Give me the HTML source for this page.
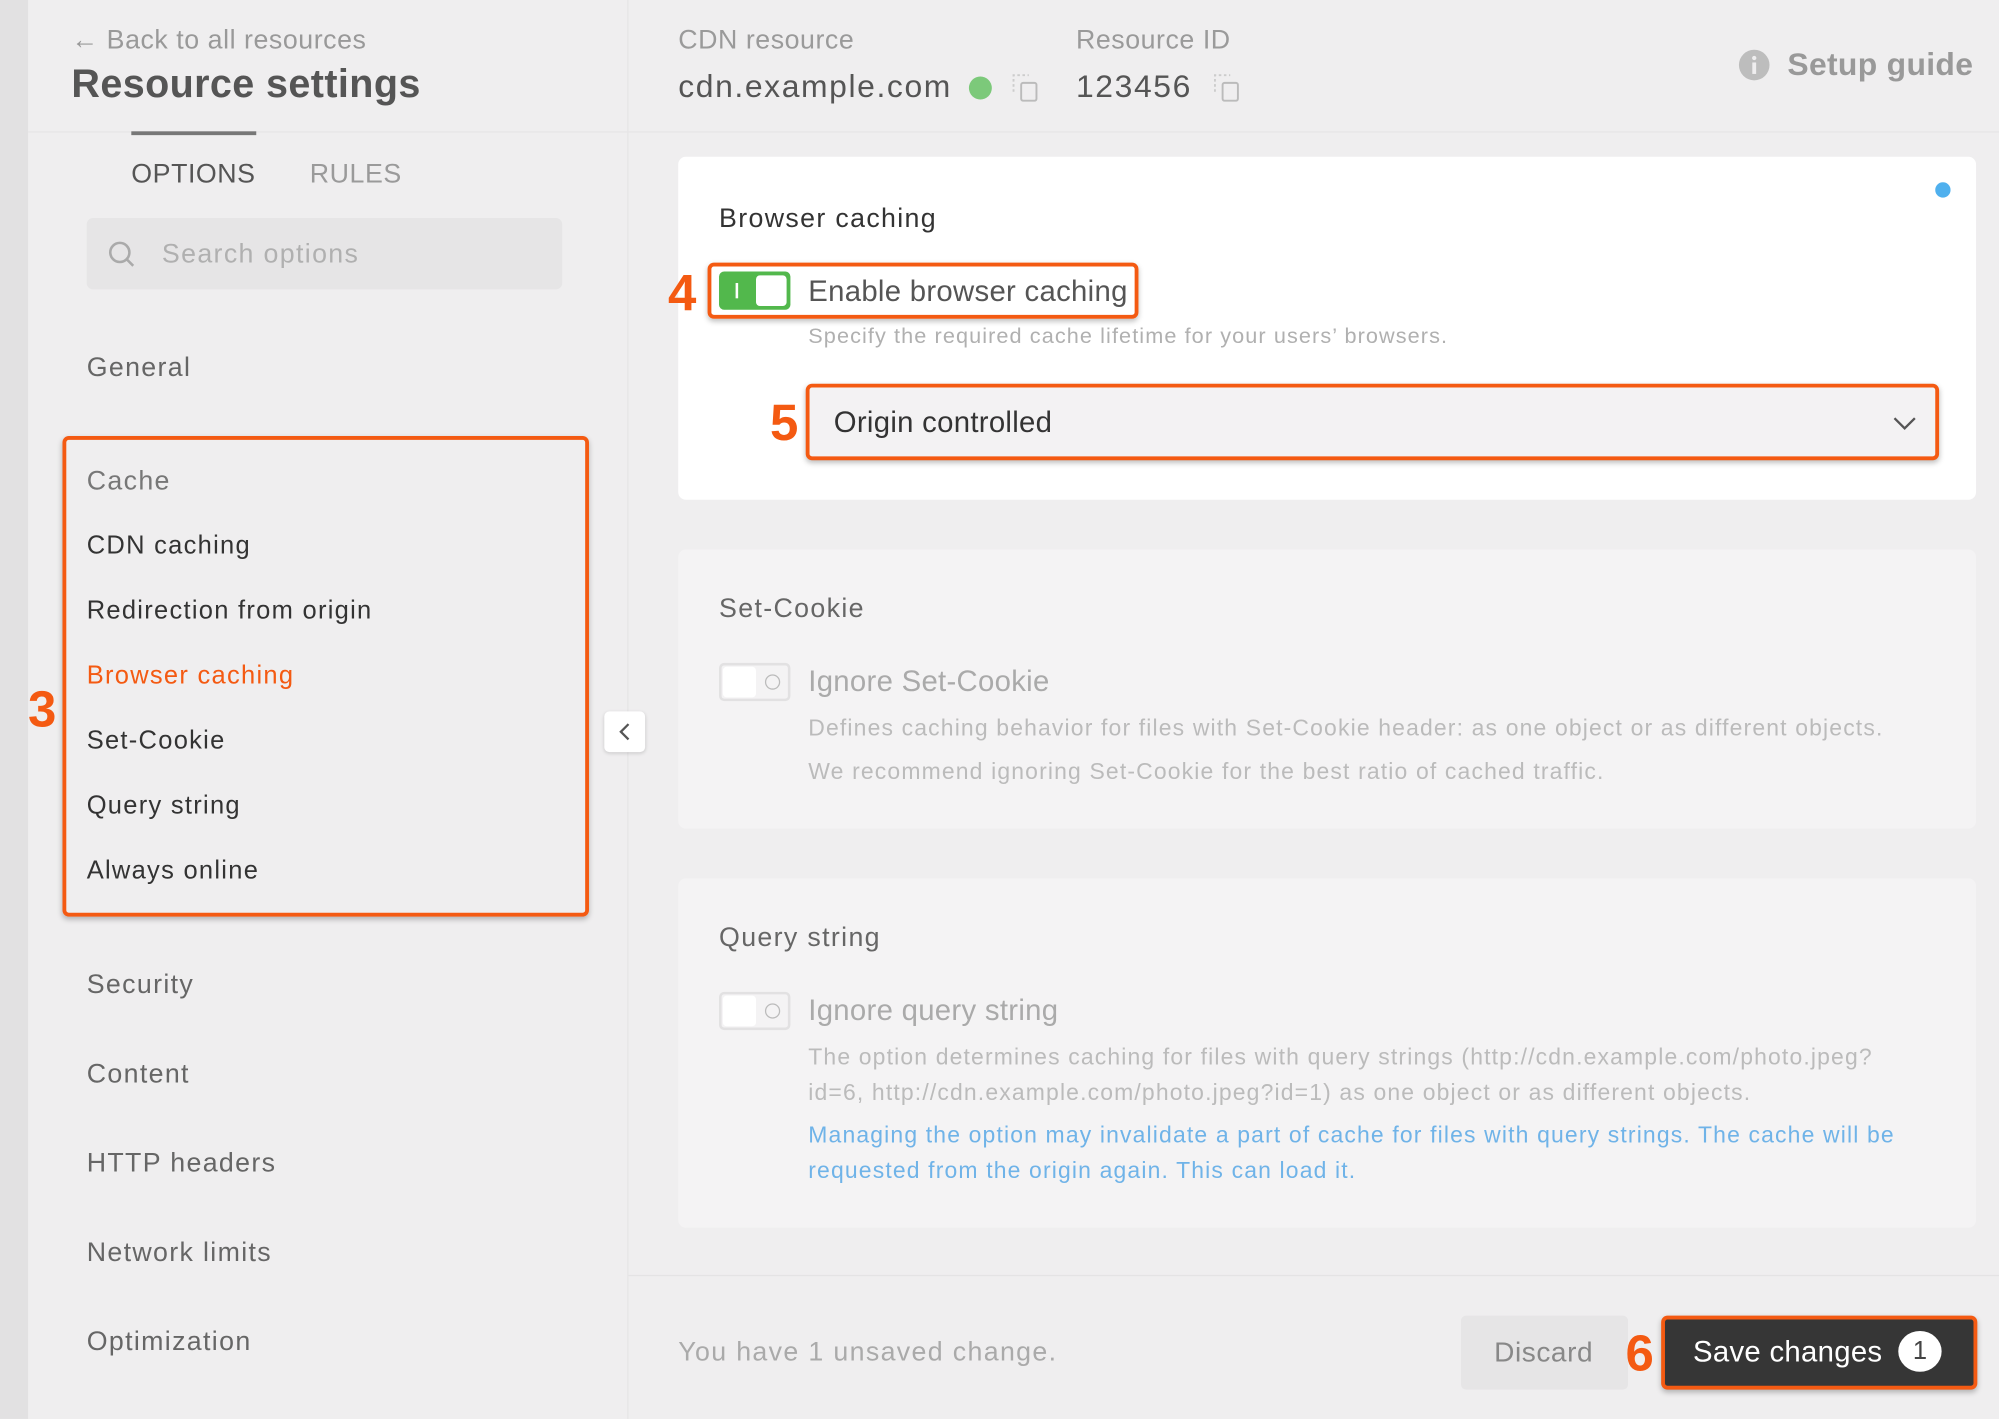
<!DOCTYPE html>
<html><head><meta charset="utf-8"><style>
*{box-sizing:border-box;margin:0;padding:0}
html,body{width:1999px;height:1419px;overflow:hidden;background:#efeeef;font-family:"Liberation Sans",sans-serif}
#w{position:absolute;left:0;top:0;width:1568px;height:1113px;transform:scale(1.27487);transform-origin:0 0;background:#efeeef}
.a{position:absolute;white-space:nowrap;line-height:1;letter-spacing:0.05em}
.o{position:absolute;border:3px solid #f45a12;border-radius:5px;box-shadow:0 2px 4px rgba(0,0,0,.25)}
.n{position:absolute;color:#f45a12;font-weight:bold;font-size:40px;line-height:1}
.card{position:absolute;left:532px;width:1018px;border-radius:6px}
.tg{position:absolute;width:56px;height:30px;border-radius:4px}
</style></head><body><div id="w">
<div style="position:absolute;left:0;top:0;width:22px;height:1113px;background:#e2e1e2"></div>
<div style="position:absolute;left:492px;top:0;width:1px;height:1113px;background:#e6e5e6"></div>
<div style="position:absolute;left:22px;top:103px;width:1546px;height:1px;background:#e6e5e6"></div>

<div class="a" style="left:56px;top:21px;font-size:21px;color:#999;letter-spacing:0.02em">← Back to all resources</div>
<div class="a" style="left:56px;top:50px;font-size:31px;color:#555;font-weight:bold;letter-spacing:0.01em">Resource settings</div>
<div style="position:absolute;left:103px;top:103px;width:98px;height:3px;background:#777"></div>
<div class="a" style="left:103px;top:126px;font-size:21px;color:#555;letter-spacing:0.02em">OPTIONS</div>
<div class="a" style="left:243px;top:126px;font-size:21px;color:#9a9a9a;letter-spacing:0.02em">RULES</div>
<div style="position:absolute;left:68px;top:171px;width:373px;height:56px;background:#e6e5e6;border-radius:5px"></div>
<svg style="position:absolute;left:84px;top:188px" width="24" height="24" viewBox="0 0 24 24"><circle cx="10" cy="10" r="7.5" fill="none" stroke="#aaa" stroke-width="2"/><path d="M15.5 15.5l5 5" stroke="#aaa" stroke-width="2"/></svg>
<div class="a" style="left:127px;top:189px;font-size:21px;color:#b0b0b0">Search options</div>
<div class="a" style="left:68px;top:278px;font-size:21px;color:#666">General</div>
<div class="o" style="left:49px;top:342px;width:413px;height:377px"></div>
<div class="n" style="left:22px;top:537px">3</div>
<div class="a" style="left:68px;top:367px;font-size:21px;color:#777">Cache</div>
<div class="a" style="left:68px;top:418px;font-size:20px;color:#333">CDN caching</div>
<div class="a" style="left:68px;top:469px;font-size:20px;color:#333">Redirection from origin</div>
<div class="a" style="left:68px;top:520px;font-size:20px;color:#f45a12">Browser caching</div>
<div class="a" style="left:68px;top:571px;font-size:20px;color:#333">Set-Cookie</div>
<div class="a" style="left:68px;top:622px;font-size:20px;color:#333">Query string</div>
<div class="a" style="left:68px;top:673px;font-size:20px;color:#333">Always online</div>
<div class="a" style="left:68px;top:762px;font-size:21px;color:#666">Security</div>
<div class="a" style="left:68px;top:832px;font-size:21px;color:#666">Content</div>
<div class="a" style="left:68px;top:902px;font-size:21px;color:#666">HTTP headers</div>
<div class="a" style="left:68px;top:972px;font-size:21px;color:#666">Network limits</div>
<div class="a" style="left:68px;top:1042px;font-size:21px;color:#666">Optimization</div>
<div style="position:absolute;left:474px;top:558px;width:32px;height:32px;background:#fff;border-radius:4px;box-shadow:0 1px 3px rgba(0,0,0,.15)"></div>
<svg style="position:absolute;left:482px;top:566px" width="16" height="16" viewBox="0 0 16 16"><path d="M11 2L5 8l6 6" fill="none" stroke="#555" stroke-width="1.8"/></svg>

<div class="a" style="left:532px;top:21px;font-size:21px;color:#9a9a9a;letter-spacing:0.02em">CDN resource</div>
<div class="a" style="left:532px;top:56px;font-size:25px;color:#555">cdn.example.com</div>
<div style="position:absolute;left:760px;top:60px;width:18px;height:18px;border-radius:50%;background:#7cc97a"></div>
<svg style="position:absolute;left:792px;top:56px" width="26" height="26" viewBox="0 0 26 26"><path d="M3 16V3h12" fill="none" stroke="#ccc" stroke-width="1.5" stroke-dasharray="2 2"/><rect x="9" y="9" width="12" height="14" rx="1.5" fill="none" stroke="#bbb" stroke-width="1.5"/></svg>
<div class="a" style="left:844px;top:21px;font-size:21px;color:#9a9a9a;letter-spacing:0.02em">Resource ID</div>
<div class="a" style="left:844px;top:56px;font-size:25px;color:#555">123456</div>
<svg style="position:absolute;left:950px;top:56px" width="26" height="26" viewBox="0 0 26 26"><path d="M3 16V3h12" fill="none" stroke="#ccc" stroke-width="1.5" stroke-dasharray="2 2"/><rect x="9" y="9" width="12" height="14" rx="1.5" fill="none" stroke="#bbb" stroke-width="1.5"/></svg>
<svg style="position:absolute;left:1363px;top:38px" width="26" height="26" viewBox="0 0 26 26"><circle cx="13" cy="13" r="12" fill="#bdbdbd"/><rect x="11.5" y="11" width="3" height="9" fill="#efeeef"/><circle cx="13" cy="7.5" r="1.7" fill="#efeeef"/></svg>
<div class="a" style="left:1402px;top:39px;font-size:25px;color:#999;font-weight:bold;letter-spacing:0.01em">Setup guide</div>

<div class="card" style="top:123px;height:269px;background:#fff"></div>
<div style="position:absolute;left:1518px;top:143px;width:12px;height:12px;border-radius:50%;background:#4fb0ee"></div>
<div class="a" style="left:564px;top:161px;font-size:21px;color:#333">Browser caching</div>
<div class="o" style="left:555px;top:206px;width:338px;height:44px;box-shadow:0 2px 4px rgba(0,0,0,.25)"></div>
<div class="n" style="left:524px;top:210px">4</div>
<div class="tg" style="left:564px;top:213px;background:#52b84c"></div>
<div style="position:absolute;left:593px;top:216px;width:24px;height:24px;background:#fff;border-radius:3px"></div>
<div style="position:absolute;left:577px;top:222px;width:2px;height:12px;background:#fff"></div>
<div class="a" style="left:634px;top:217px;font-size:23px;color:#555;letter-spacing:0.01em">Enable browser caching</div>
<div class="a" style="left:634px;top:255px;font-size:17px;color:#b0b0b0">Specify the required cache lifetime for your users’ browsers.</div>
<div class="o" style="left:632px;top:301px;width:889px;height:60px;background:#f3f2f3"></div>
<div class="n" style="left:604px;top:312px">5</div>
<div class="a" style="left:654px;top:320px;font-size:23px;color:#333;letter-spacing:0.01em">Origin controlled</div>
<svg style="position:absolute;left:1484px;top:322px" width="20" height="20" viewBox="0 0 20 20"><path d="M2 6l8 8 8-8" fill="none" stroke="#555" stroke-width="1.8"/></svg>

<div class="card" style="top:431px;height:219px;background:#f4f3f4"></div>
<div class="a" style="left:564px;top:467px;font-size:21px;color:#666">Set-Cookie</div>
<div class="tg" style="left:564px;top:520px;border:2px solid #e2e1e2;background:#f4f3f4"></div>
<div style="position:absolute;left:567px;top:523px;width:26px;height:24px;background:#fff;border-radius:3px"></div>
<div style="position:absolute;left:600px;top:529px;width:12px;height:12px;border:1.5px solid #bbb;border-radius:50%"></div>
<div class="a" style="left:634px;top:523px;font-size:23px;color:#aaa;letter-spacing:0.01em">Ignore Set-Cookie</div>
<div class="a" style="left:634px;top:562px;font-size:18px;color:#bbb">Defines caching behavior for files with Set-Cookie header: as one object or as different objects.</div>
<div class="a" style="left:634px;top:596px;font-size:18px;color:#bbb">We recommend ignoring Set-Cookie for the best ratio of cached traffic.</div>

<div class="card" style="top:689px;height:274px;background:#f4f3f4"></div>
<div class="a" style="left:564px;top:725px;font-size:21px;color:#666">Query string</div>
<div class="tg" style="left:564px;top:778px;border:2px solid #e2e1e2;background:#f4f3f4"></div>
<div style="position:absolute;left:567px;top:781px;width:26px;height:24px;background:#fff;border-radius:3px"></div>
<div style="position:absolute;left:600px;top:787px;width:12px;height:12px;border:1.5px solid #bbb;border-radius:50%"></div>
<div class="a" style="left:634px;top:781px;font-size:23px;color:#aaa;letter-spacing:0.01em">Ignore query string</div>
<div class="a" style="left:634px;top:820px;font-size:18px;color:#bbb">The option determines caching for files with query strings (http://cdn.example.com/photo.jpeg?</div>
<div class="a" style="left:634px;top:848px;font-size:18px;color:#bbb">id=6, http://cdn.example.com/photo.jpeg?id=1) as one object or as different objects.</div>
<div class="a" style="left:634px;top:881px;font-size:18px;color:#6fb3e8">Managing the option may invalidate a part of cache for files with query strings. The cache will be</div>
<div class="a" style="left:634px;top:909px;font-size:18px;color:#6fb3e8">requested from the origin again. This can load it.</div>

<div style="position:absolute;left:493px;top:1000px;width:1075px;height:1px;background:#e4e3e4"></div>
<div class="a" style="left:532px;top:1050px;font-size:21px;color:#aaa">You have 1 unsaved change.</div>
<div style="position:absolute;left:1146px;top:1032px;width:131px;height:58px;background:#e6e5e6;border-radius:4px"></div>
<div class="a" style="left:1172px;top:1050px;font-size:22px;color:#888;letter-spacing:0.02em">Discard</div>
<div class="n" style="left:1275px;top:1042px">6</div>
<div class="o" style="left:1303px;top:1032px;width:248px;height:58px;background:#363636"></div>
<div class="a" style="left:1328px;top:1049px;font-size:23px;color:#fff;letter-spacing:0.01em">Save changes</div>
<div style="position:absolute;left:1489px;top:1044px;width:34px;height:32px;border-radius:50%;background:#fff;color:#444;font-size:20px;line-height:32px;text-align:center">1</div>
</div></body></html>
